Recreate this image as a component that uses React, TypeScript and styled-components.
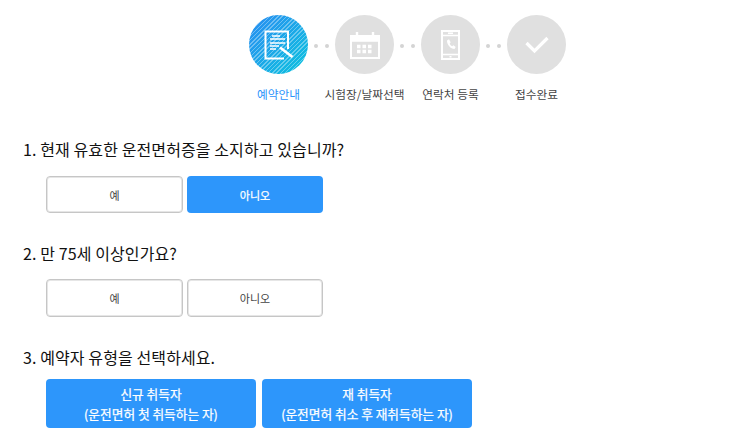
import { createGlobalStyle } from 'styled-components'
import styled from 'styled-components'

const Global = createGlobalStyle`
  html, body {
    margin: 0;
    padding: 0;
    background: #fff;
    font-family: "Noto Sans CJK KR", "Noto Sans", sans-serif;
  }
`

const Page = styled.div`
  width: 746px;
  height: 448px;
  overflow: hidden;
  padding: 15px 0 0 23px;
  box-sizing: border-box;
`

const Steps = styled.div`
  display: flex;
  margin-left: 226px;
  height: 122px;
`

const Step = styled.div`
  width: 59px;
  display: flex;
  flex-direction: column;
  align-items: center;
`

const Circle = styled.div<{ $active?: boolean }>`
  width: 59px;
  height: 59px;
  flex: none;
  border-radius: 50%;
  display: flex;
  align-items: center;
  justify-content: center;
  background: ${(p) =>
    p.$active
      ? `repeating-linear-gradient(135deg, rgba(255,255,255,0.35) 0 1px, rgba(255,255,255,0) 1px 3px), linear-gradient(135deg, #2a8cf2 0%, #0cc4de 100%)`
      : '#e0e0e0'};
`

const Label = styled.div<{ $active?: boolean }>`
  margin-top: 11px;
  font-size: 11.7px;
  line-height: 18px;
  white-space: nowrap;
  color: ${(p) => (p.$active ? '#2a93fb' : '#444')};
`

const Dots = styled.div`
  width: 27px;
  height: 59px;
  display: flex;
  align-items: center;
  justify-content: center;
  gap: 7px;
  padding-top: 3px;
  box-sizing: border-box;
`

const Dot = styled.span`
  width: 4px;
  height: 4px;
  border-radius: 50%;
  background: #d4d4d4;
`

const Question = styled.div`
  font-size: 16px;
  line-height: 24px;
  letter-spacing: 0.1px;
  color: #111;
  height: 24px;
`

const Answers = styled.div<{ $gap: number; $top: number }>`
  display: flex;
  gap: ${(p) => p.$gap}px;
  margin: ${(p) => p.$top}px 0 0 23px;
`

const Answer = styled.div<{ $on?: boolean; $w: number; $h: number }>`
  width: ${(p) => p.$w}px;
  height: ${(p) => p.$h}px;
  box-sizing: border-box;
  display: flex;
  align-items: center;
  justify-content: center;
  text-align: center;
  border-radius: 4px;
  font-size: 11px;
  line-height: 18px;
  background: ${(p) => (p.$on ? '#2d96fb' : '#fff')};
  color: ${(p) => (p.$on ? '#fff' : '#444')};
  border: ${(p) => (p.$on ? 'none' : '1px solid #c6c6c6')};
  box-shadow: ${(p) => (p.$on ? 'none' : 'inset 0 0 0 1px #e6e6e6')};
  -webkit-text-stroke: ${(p) => (p.$on ? '0.25px #fff' : '0')};
`

const Section = styled.div<{ $h: number }>`
  height: ${(p) => p.$h}px;
`

const WideAnswer = styled(Answer)`
  font-size: 12.7px;
  line-height: 20px;
`

const I = { fill: 'none', stroke: '#fff', strokeWidth: 1.5 }

const App = () => (
  <Page>
    <Global />
    <Steps>
      <Step>
        <Circle $active>
          <svg width="30" height="30" viewBox="0 0 30 30" {...I}>
            <path d="M24 19V1.500H1.500v27H20" strokeWidth="2" />
            <path d="M8 6h8M6 9h15M6 13h15M6 16h9M6 19h6" />
            <path d="M16 17.500l12.500 9.500" strokeWidth="2.800" />
          </svg>
        </Circle>
        <Label $active>예약안내</Label>
      </Step>
      <Dots><Dot /><Dot /></Dots>
      <Step>
        <Circle>
          <svg width="32" height="30" viewBox="0 0 32 30" {...I}>
            <path d="M2 6h28v22H2z" strokeWidth="2" />
            <path d="M2 6h28v5H2z" fill="#fff" />
            <path d="M8 2v5M24 2v5" strokeWidth="2.400" />
            <path d="M8 16.500h3.500M13.500 16.500h3.500M19 16.500h3.500M8 21.500h3.500M13.500 21.500h3.500M19 21.500h3.500" strokeWidth="3.400" />
          </svg>
        </Circle>
        <Label>시험장/날짜선택</Label>
      </Step>
      <Dots><Dot /><Dot /></Dots>
      <Step>
        <Circle>
          <svg width="19" height="30" viewBox="0 0 19 30" {...I}>
            <rect x="1" y="1" width="17" height="28" strokeWidth="2" />
            <path d="M1 5.500h17M1 24.500h17" />
            <path d="M7 3.300h5M8.500 26.800h2" />
            <path d="M6 10.500l2-1.200 1.700 3-1 1.200c.5 1.300 1.300 2.200 2.500 2.700l1.200-1 2.300 1.800-1.200 2c-3.800 0-7.700-4.300-7.500-8.500z" fill="#fff" stroke="none" />
          </svg>
        </Circle>
        <Label>연락처 등록</Label>
      </Step>
      <Dots><Dot /><Dot /></Dots>
      <Step>
        <Circle>
          <svg width="24" height="18" viewBox="0 0 24 18" fill="none" stroke="#fff" strokeWidth="3.200">
            <path d="M1.500 7l8 8L22.500 2" />
          </svg>
        </Circle>
        <Label>접수완료</Label>
      </Step>
    </Steps>
    <Section $h={104}>
      <Question>1. 현재 유효한 운전면허증을 소지하고 있습니까?</Question>
      <Answers $gap={4} $top={15}>
        <Answer $w={137} $h={37}>예</Answer>
        <Answer $w={136} $h={37} $on>아니오</Answer>
      </Answers>
    </Section>
    <Section $h={104}>
      <Question>2. 만 75세 이상인가요?</Question>
      <Answers $gap={4} $top={14}>
        <Answer $w={137} $h={38}>예</Answer>
        <Answer $w={136} $h={38}>아니오</Answer>
      </Answers>
    </Section>
    <Section $h={90}>
      <Question>3. 예약자 유형을 선택하세요.</Question>
      <Answers $gap={6} $top={10}>
        <WideAnswer $w={210} $h={49} $on>신규 취득자<br />(운전면허 첫 취득하는 자)</WideAnswer>
        <WideAnswer $w={210} $h={49} $on>재 취득자<br />(운전면허 취소 후 재취득하는 자)</WideAnswer>
      </Answers>
    </Section>
  </Page>
)

export default App
